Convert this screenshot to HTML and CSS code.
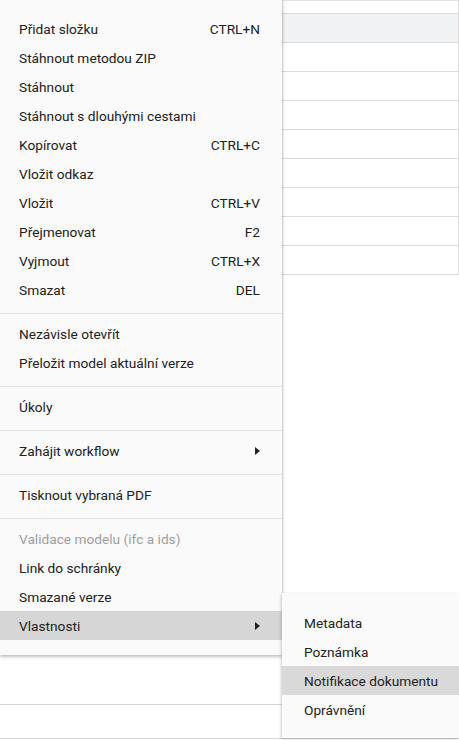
FILE: index.html
```html
<!DOCTYPE html>
<html lang="cs">
<head>
<meta charset="utf-8">
<title>Kontextové menu</title>
<link rel="stylesheet" href="styles.css">
</head>
<body>
<div class="page">
  <div class="grid">
    <div class="row row-head"></div>
    <div class="row row-active"></div>
    <div class="row"></div>
    <div class="row"></div>
    <div class="row"></div>
    <div class="row"></div>
    <div class="row"></div>
    <div class="row"></div>
    <div class="row"></div>
    <div class="row row-last"></div>
  </div>
  <div class="lower">
    <div class="lrow"></div>
    <div class="lrow"></div>
  </div>

  <div class="menu">
    <div class="item"><span>Přidat složku</span><span class="key">CTRL+N</span></div>
    <div class="item"><span>Stáhnout metodou ZIP</span></div>
    <div class="item"><span>Stáhnout</span></div>
    <div class="item"><span>Stáhnout s dlouhými cestami</span></div>
    <div class="item"><span>Kopírovat</span><span class="key">CTRL+C</span></div>
    <div class="item"><span>Vložit odkaz</span></div>
    <div class="item"><span>Vložit</span><span class="key">CTRL+V</span></div>
    <div class="item"><span>Přejmenovat</span><span class="key">F2</span></div>
    <div class="item"><span>Vyjmout</span><span class="key">CTRL+X</span></div>
    <div class="item"><span>Smazat</span><span class="key">DEL</span></div>
    <div class="sep"></div>
    <div class="item"><span>Nezávisle otevřít</span></div>
    <div class="item"><span>Přeložit model aktuální verze</span></div>
    <div class="sep"></div>
    <div class="item"><span>Úkoly</span></div>
    <div class="sep"></div>
    <div class="item"><span>Zahájit workflow</span><span class="arrow"></span></div>
    <div class="sep"></div>
    <div class="item"><span>Tisknout vybraná PDF</span></div>
    <div class="sep"></div>
    <div class="item disabled"><span>Validace modelu (ifc a ids)</span></div>
    <div class="item"><span>Link do schránky</span></div>
    <div class="item"><span>Smazané verze</span></div>
    <div class="item active"><span>Vlastnosti</span><span class="arrow"></span></div>
  </div>

  <div class="submenu">
    <div class="sitem"><span>Metadata</span></div>
    <div class="sitem"><span>Poznámka</span></div>
    <div class="sitem active"><span>Notifikace dokumentu</span></div>
    <div class="sitem"><span>Oprávnění</span></div>
  </div>
</div>
</body>
</html>
```

FILE: styles.css
```css
html, body {
  margin: 0;
  padding: 0;
  background: #ffffff;
}

body {
  font-family: Roboto, "Liberation Sans", sans-serif;
  font-size: 13.7px;
  color: #212121;
  width: 459px;
  height: 740px;
  overflow: hidden;
}

.page {
  position: relative;
  width: 459px;
  height: 740px;
}

.grid {
  width: 458px;
  border-right: 1px solid #dedede;
  border-top: 1px solid #e2e2e2;
}

.row {
  height: 28px;
  border-top: 1px solid #dcdcdc;
  background: #ffffff;
}

.row-head {
  height: 12px;
  border-top: none;
}

.row-active {
  background: #f1f2f4;
}

.row-last {
  border-bottom: 1px solid #dcdcdc;
}

.lower {
  margin-top: 429px;
  width: 459px;
}

.lrow {
  height: 33px;
  border-top: 1px solid #d4d4d4;
}

.menu {
  position: absolute;
  top: -1px;
  left: 0;
  width: 282px;
  box-sizing: border-box;
  padding: 15px 0 15px;
  background: #fafafa;
  box-shadow: 1px 0 2px rgba(0, 0, 0, 0.14), 0 2px 3px rgba(0, 0, 0, 0.22);
  z-index: 2;
}

.item {
  height: 29px;
  display: flex;
  align-items: center;
  justify-content: space-between;
  padding: 0 22px 0 19px;
  white-space: nowrap;
}

.item.active {
  background: #d6d6d6;
}

.item.disabled {
  color: #9e9e9e;
}

.key {
  color: #212121;
}

.arrow {
  width: 0;
  height: 0;
  border-top: 4px solid transparent;
  border-bottom: 4px solid transparent;
  border-left: 5px solid #212121;
}

.sep {
  height: 1px;
  background: #e3e3e3;
  margin: 9px 0 5px;
}

.submenu {
  position: absolute;
  top: 593px;
  left: 282px;
  width: 177px;
  box-sizing: border-box;
  padding: 15px 0 14px;
  background: #fafafa;
  box-shadow: -1px 1px 3px rgba(0, 0, 0, 0.2);
  z-index: 3;
}

.sitem {
  height: 29px;
  display: flex;
  align-items: center;
  padding: 0 18px 0 22px;
  white-space: nowrap;
}

.sitem.active {
  background: #d9d9d9;
}
```
